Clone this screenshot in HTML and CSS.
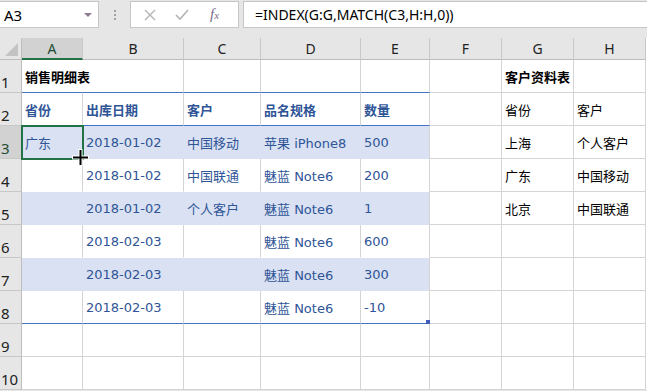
FILE: index.html
```html
<!DOCTYPE html>
<html lang="zh-CN">
<head>
    <meta charset="UTF-8">
    <title>销售明细表</title>
    <link rel="stylesheet" href="styles.css">
</head>
<body>

    <!-- Name box + formula bar -->
    <div class="toolbar">
        <div class="namebox">
            <span>A3</span>
            <span class="drop"></span>
        </div>
        <div class="grip"><i></i><i></i><i></i></div>
        <div class="fxbox">
            <svg class="ico" width="14" height="14" viewBox="0 0 14 14"><path d="M2 2 L12 12 M12 2 L2 12" stroke="#b4b4b4" stroke-width="1.4" fill="none"/></svg>
            <svg class="ico" width="16" height="14" viewBox="0 0 16 14"><path d="M2 7 L6 11 L14 2" stroke="#b4b4b4" stroke-width="1.6" fill="none"/></svg>
            <span class="fx">f<small>x</small></span>
        </div>
        <div class="formula">=INDEX(G:G,MATCH(C3,H:H,0))</div>
    </div>

    <!-- Worksheet -->
    <div class="sheet">
        <div class="grid">
            <div class="corner"><span></span></div>
            <div class="colhead active">A</div>
            <div class="colhead">B</div>
            <div class="colhead">C</div>
            <div class="colhead">D</div>
            <div class="colhead">E</div>
            <div class="colhead">F</div>
            <div class="colhead">G</div>
            <div class="colhead">H</div>

            <!-- row 1 -->
            <div class="rowhead">1</div>
            <div class="cell title spill">销售明细表</div>
            <div class="cell"></div>
            <div class="cell"></div>
            <div class="cell"></div>
            <div class="cell"></div>
            <div class="cell"></div>
            <div class="cell title">客户资料表</div>
            <div class="cell"></div>

            <!-- row 2 -->
            <div class="rowhead">2</div>
            <div class="cell th">省份</div>
            <div class="cell th">出库日期</div>
            <div class="cell th">客户</div>
            <div class="cell th">品名规格</div>
            <div class="cell th">数量</div>
            <div class="cell"></div>
            <div class="cell">省份</div>
            <div class="cell">客户</div>

            <!-- row 3 -->
            <div class="rowhead active">3</div>
            <div class="cell td band">广东</div>
            <div class="cell td band">2018-01-02</div>
            <div class="cell td band">中国移动</div>
            <div class="cell td band">苹果 iPhone8</div>
            <div class="cell td band last">500</div>
            <div class="cell"></div>
            <div class="cell">上海</div>
            <div class="cell">个人客户</div>

            <!-- row 4 -->
            <div class="rowhead">4</div>
            <div class="cell td"></div>
            <div class="cell td">2018-01-02</div>
            <div class="cell td">中国联通</div>
            <div class="cell td">魅蓝 Note6</div>
            <div class="cell td last">200</div>
            <div class="cell"></div>
            <div class="cell">广东</div>
            <div class="cell">中国移动</div>

            <!-- row 5 -->
            <div class="rowhead">5</div>
            <div class="cell td band"></div>
            <div class="cell td band">2018-01-02</div>
            <div class="cell td band">个人客户</div>
            <div class="cell td band">魅蓝 Note6</div>
            <div class="cell td band last">1</div>
            <div class="cell"></div>
            <div class="cell">北京</div>
            <div class="cell">中国联通</div>

            <!-- row 6 -->
            <div class="rowhead">6</div>
            <div class="cell td"></div>
            <div class="cell td">2018-02-03</div>
            <div class="cell td"></div>
            <div class="cell td">魅蓝 Note6</div>
            <div class="cell td last">600</div>
            <div class="cell"></div>
            <div class="cell"></div>
            <div class="cell"></div>

            <!-- row 7 -->
            <div class="rowhead">7</div>
            <div class="cell td band"></div>
            <div class="cell td band">2018-02-03</div>
            <div class="cell td band"></div>
            <div class="cell td band">魅蓝 Note6</div>
            <div class="cell td band last">300</div>
            <div class="cell"></div>
            <div class="cell"></div>
            <div class="cell"></div>

            <!-- row 8 -->
            <div class="rowhead">8</div>
            <div class="cell td end"></div>
            <div class="cell td end">2018-02-03</div>
            <div class="cell td end"></div>
            <div class="cell td end">魅蓝 Note6</div>
            <div class="cell td end last">-10</div>
            <div class="cell"></div>
            <div class="cell"></div>
            <div class="cell"></div>

            <!-- rows 9-10 -->
            <div class="rowhead">9</div>
            <div class="cell"></div><div class="cell"></div><div class="cell"></div><div class="cell"></div>
            <div class="cell"></div><div class="cell"></div><div class="cell"></div><div class="cell"></div>
            <div class="rowhead">10</div>
            <div class="cell"></div><div class="cell"></div><div class="cell"></div><div class="cell"></div>
            <div class="cell"></div><div class="cell"></div><div class="cell"></div><div class="cell"></div>
        </div>

        <!-- overlays: active cell, table resize handle, mouse cursor -->
        <div class="selection"></div>
        <div class="resize"></div>
        <svg class="cursor" width="19" height="19" viewBox="0 0 19 19">
            <path d="M7.5 1 H11.5 V7.5 H18 V11.5 H11.5 V18 H7.5 V11.5 H1 V7.5 H7.5 Z" fill="#fff"/>
            <path d="M8.5 2 H10.5 V8.5 H17 V10.5 H10.5 V17 H8.5 V10.5 H2 V8.5 H8.5 Z" fill="#000"/>
        </svg>
    </div>

</body>
</html>
```

FILE: styles.css
```css
body {
    margin: 0;
    width: 647px;
    height: 391px;
    overflow: hidden;
    background: #e6e6e6;
    font-family: "Noto Sans", "Noto Sans CJK SC", sans-serif;
    color: #000;
}

/* ---- formula bar ---- */
.toolbar {
    display: flex;
    align-items: flex-start;
    height: 38px;
    padding-top: 1px;
    box-sizing: border-box;
}
.namebox {
    width: 99px;
    height: 27px;
    box-sizing: border-box;
    background: #fff;
    border: 1px solid #c6c6c6;
    border-left: none;
    display: flex;
    align-items: center;
    justify-content: space-between;
    padding: 0 6px 0 4px;
    font-size: 15px;
}
.drop {
    width: 0;
    height: 0;
    border-left: 4px solid transparent;
    border-right: 4px solid transparent;
    border-top: 4px solid #8c7f96;
}
.grip {
    width: 31px;
    height: 27px;
    display: flex;
    flex-direction: column;
    align-items: center;
    justify-content: center;
    gap: 2px;
}
.grip i {
    width: 2px;
    height: 2px;
    background: #a0a0a0;
}
.fxbox {
    width: 109px;
    height: 27px;
    box-sizing: border-box;
    background: #fff;
    border: 1px solid #c6c6c6;
    display: flex;
    align-items: center;
    padding-left: 12px;
    gap: 17px;
}
.fx {
    font-family: "Liberation Serif", serif;
    font-style: italic;
    font-size: 15px;
    color: #7a6a8a;
    margin-left: 3px;
}
.fx small {
    font-size: 11px;
}
.formula {
    flex: 1;
    margin-left: 4px;
    height: 27px;
    box-sizing: border-box;
    background: #fff;
    border: 1px solid #c6c6c6;
    border-right: none;
    padding-left: 11px;
    font-size: 14px;
    line-height: 25px;
}

/* ---- worksheet grid ---- */
.sheet {
    position: relative;
}
.grid {
    display: grid;
    grid-template-columns: 22px 61px 101px 77px 100px 69px 72px 72px 72px;
    grid-template-rows: 22px repeat(10, 33px);
    background: #fff;
}
.corner {
    background: #e6e6e6;
    border-right: 1px solid #bdbdbd;
    border-bottom: 1px solid #bdbdbd;
    position: relative;
}
.corner span {
    position: absolute;
    right: 3px;
    bottom: 3px;
    width: 0;
    height: 0;
    border-left: 13px solid transparent;
    border-bottom: 13px solid #c3c3c3;
}
.colhead {
    background: #e6e6e6;
    border-right: 1px solid #c8c8c8;
    border-bottom: 1px solid #bdbdbd;
    text-align: center;
    font-size: 14px;
    line-height: 22px;
    color: #222;
}
.colhead.active {
    background: #d2d2d2;
    border-bottom: 2px solid #217346;
    color: #1e4d34;
}
.rowhead {
    background: #e6e6e6;
    border-right: 1px solid #bdbdbd;
    border-bottom: 1px solid #c8c8c8;
    font-size: 15px;
    padding-left: 1px;
    display: flex;
    align-items: flex-end;
    line-height: 20px;
    color: #222;
}
.rowhead.active {
    background: #d2d2d2;
    color: #1e4d34;
}
.cell {
    border-right: 1px solid #d4d4d4;
    border-bottom: 1px solid #d4d4d4;
    font-family: "DejaVu Sans", "Noto Sans CJK SC", sans-serif;
    font-size: 13px;
    padding-left: 3px;
    display: flex;
    align-items: center;
    white-space: nowrap;
    box-sizing: border-box;
    min-width: 0;
}
.cell.spill {
    border-right-color: transparent;
    overflow: visible;
}
.cell.title {
    font-weight: bold;
}

/* table style: header row and banded body */
.cell.th {
    font-weight: bold;
    color: #2f5597;
    border-top: 1px solid #4472c4;
    margin-top: -1px;
    border-bottom: 1px solid #4472c4;
}
.cell.td {
    color: #2f5597;
    border-bottom-color: #fff;
}
.cell.band {
    background: #d9e1f2;
    border-right-color: #d9e1f2;
    border-bottom-color: #d9e1f2;
}
.cell.last {
    border-right-color: #d4d4d4;
}
.cell.end {
    border-bottom: 1px solid #4472c4;
}

/* ---- overlays ---- */
.selection {
    position: absolute;
    left: 21px;
    top: 87px;
    width: 63px;
    height: 35px;
    box-sizing: border-box;
    border: 2px solid #217346;
}
.resize {
    position: absolute;
    left: 426px;
    top: 282px;
    width: 4px;
    height: 4px;
    background: #4060b8;
}
.cursor {
    position: absolute;
    left: 71px;
    top: 110px;
}
```
